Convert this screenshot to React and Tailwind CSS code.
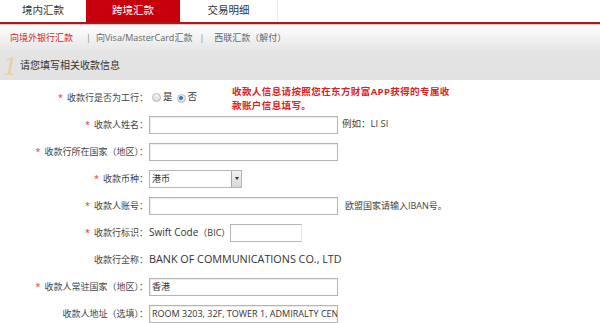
import React from "react";

const F = { fontFamily: '"Open Sans", "Noto Sans CJK SC", sans-serif' };

function Label({ req, children }) {
  return (
    <div className="w-[149px] shrink-0 text-right pr-[1px] whitespace-nowrap text-[9px]">
      {req && <span className="text-[#e03030] mr-[4px]">*</span>}
      {children}
    </div>
  );
}

function Input({ w = "w-[189px]", value = "" }) {
  return (
    <div
      className={`${w} h-[18px] border border-[#b5b5b5] bg-white shadow-[inset_1px_1px_1px_rgba(0,0,0,0.08)] flex items-center px-[2px] text-[9px] text-[#333] whitespace-nowrap overflow-hidden`}
    >
      {value}
    </div>
  );
}

function Row({ children }) {
  return <div className="h-[27px] flex items-center">{children}</div>;
}

function Radio({ checked }) {
  return (
    <span className="inline-flex w-[9px] h-[9px] rounded-full border border-[#b8b8b8] bg-gradient-to-b from-[#f4f4f4] to-[#dcdcdc] items-center justify-center">
      {checked && <span className="w-[4px] h-[4px] rounded-full bg-[#3a6fc0]" />}
    </span>
  );
}

export default function App() {
  return (
    <div className="w-[600px] h-[323px] overflow-hidden bg-white text-[#444] text-[10px]" style={F}>
      {/* Tabs */}
      <div className="h-[22px] flex bg-white text-[10.5px]">
        <div className="w-[86px] flex items-center justify-center text-[#333]">境内汇款</div>
        <div className="w-[94px] flex items-center justify-center bg-[#c8000b] text-white">跨境汇款</div>
        <div className="w-[98px] flex items-center justify-center text-[#333] border-r border-[#eee]">交易明细</div>
      </div>
      <div className="h-[2px] bg-[#a51c1c]" />
      <div className="h-[1px] bg-[#f2c4c4]" />
      {/* Gray area */}
      <div className="h-[55px] bg-gradient-to-b from-white via-[#e4e4e4] via-50% to-[#e2e2e2]">
        <div className="h-[25px] flex items-center text-[9px] text-[#666] pt-[1px]">
          <span className="ml-[10px] text-[#d42424]">向境外银行汇款</span>
          <span className="ml-[13px] text-[#888]">|</span>
          <span className="ml-[5px]">向Visa/MasterCard汇款</span>
          <span className="ml-[7px] text-[#888]">|</span>
          <span className="ml-[10px]">西联汇款（解付）</span>
        </div>
        <div className="h-[30px] flex items-center">
          <span
            className="ml-[3px] w-[12px] text-[24px] italic leading-none text-[#ebd0a6] mt-[3px]"
            style={{ fontFamily: '"DejaVu Serif", serif' }}
          >
            1
          </span>
          <span className="ml-[5px] text-[10px] text-[#333]">请您填写相关收款信息</span>
        </div>
      </div>
      {/* Form */}
      <div className="pt-[4px]">
        <Row>
          <Label req>收款行是否为工行：</Label>
          <div className="flex items-center ml-[3px] text-[9.5px]">
            <Radio />
            <span className="ml-[2px] text-[#333]">是</span>
            <span className="ml-[4px]"><Radio checked /></span>
            <span className="ml-[2px] text-[#333]">否</span>
          </div>
          <div className="ml-[35px] text-[9.5px] font-bold text-[#e02020] leading-[14px] tracking-[0.4px] self-start mt-[1px]">
            收款人信息请按照您在东方财富APP获得的专属收
            <br />
            款账户信息填写。
          </div>
        </Row>
        <Row>
          <Label req>收款人姓名：</Label>
          <Input />
          <span className="ml-[4px] text-[9.5px]">例如：LI SI</span>
        </Row>
        <Row>
          <Label req>收款行所在国家（地区）：</Label>
          <Input />
        </Row>
        <Row>
          <Label req>收款币种：</Label>
          <div className="w-[93px] h-[18px] border border-[#b5b5b5] bg-white flex items-center">
            <span className="flex-1 px-[2px] text-[9px] text-[#333]">港币</span>
            <div className="w-[10px] h-full border-l border-[#aaa] bg-gradient-to-b from-[#f2f2f2] to-[#d8d8d8] flex items-center justify-center">
              <span className="w-0 h-0 border-l-[2px] border-r-[2px] border-t-[3px] border-l-transparent border-r-transparent border-t-[#333]" />
            </div>
          </div>
        </Row>
        <Row>
          <Label req>收款人账号：</Label>
          <Input />
          <span className="ml-[7px] text-[9px]">欧盟国家请输入IBAN号。</span>
        </Row>
        <Row>
          <Label req>收款行标识：</Label>
          <span className="text-[#333] text-[10px]">Swift Code<span className="text-[9px]">（BIC）</span></span>
          <div className="w-[72px] h-[18px] border border-[#b5b5b5] border-r-[#e5e5e5] bg-white" />
        </Row>
        <Row>
          <Label>收款行全称：</Label>
          <span className="text-[#333] text-[10.8px]">BANK OF COMMUNICATIONS CO., LTD</span>
        </Row>
        <Row>
          <Label req>收款人常驻国家（地区）：</Label>
          <Input value="香港" />
        </Row>
        <Row>
          <Label>收款人地址（选填）：</Label>
          <Input value="ROOM 3203, 32F, TOWER 1, ADMIRALTY CEN" />
        </Row>
      </div>
    </div>
  );
}
